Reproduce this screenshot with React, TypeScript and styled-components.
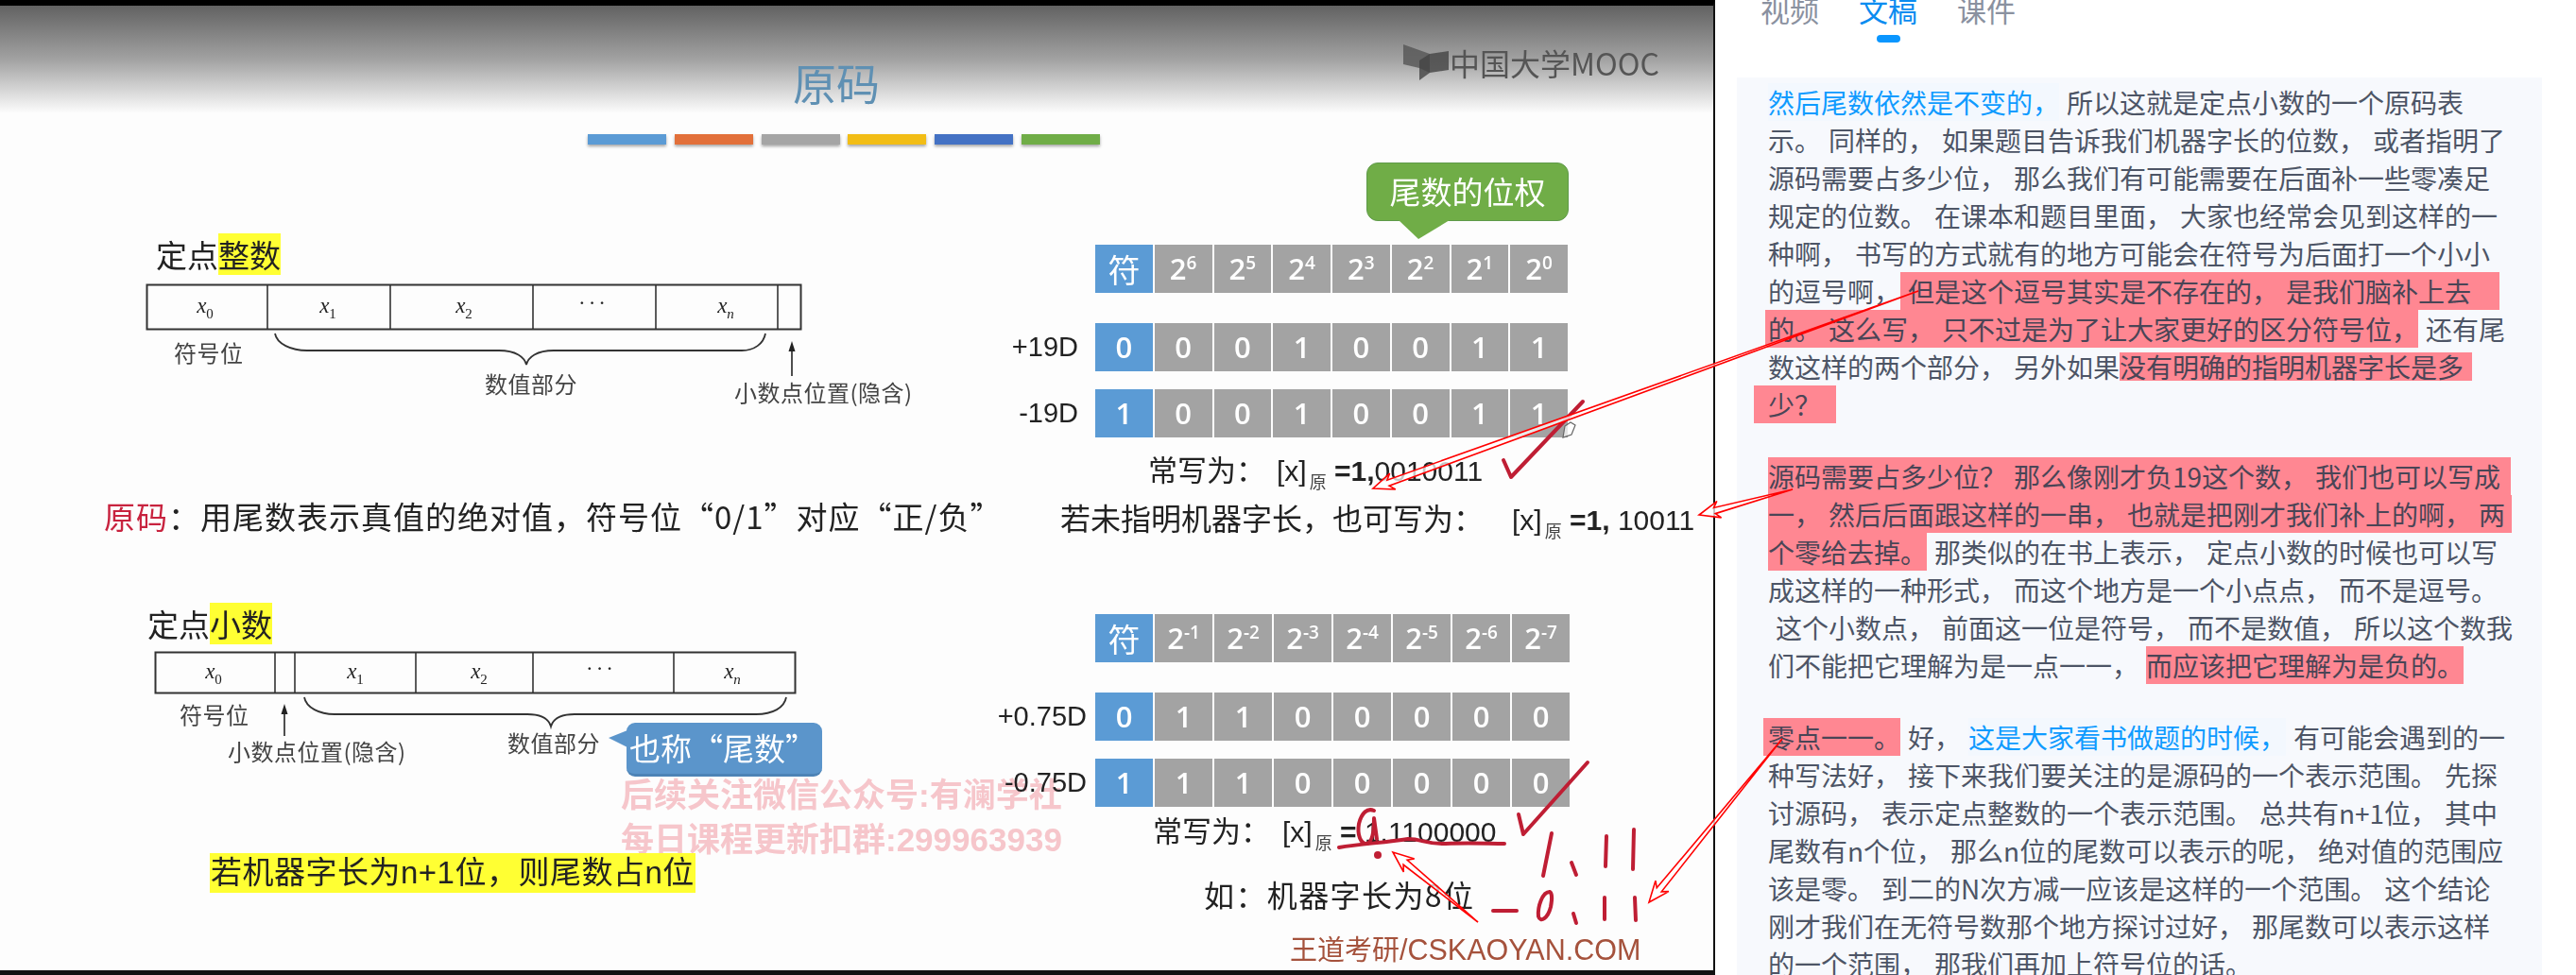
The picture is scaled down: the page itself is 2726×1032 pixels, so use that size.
import React from "react";
import styled, { createGlobalStyle } from "styled-components";

const SLIDE_FONT = `"Liberation Sans", "Noto Sans CJK SC", sans-serif`;
const CJK_FONT = `"Noto Sans CJK SC", sans-serif`;

const GlobalStyle = createGlobalStyle`
  html, body {
    margin: 0;
    padding: 0;
    background: #fff;
    overflow: hidden;
  }
`;

const Page = styled.div`
  position: relative;
  display: flex;
  width: 2726px;
  height: 1032px;
  overflow: hidden;
  background: #fff;
`;

/* ---------- slide ---------- */

const Slide = styled.div`
  position: relative;
  flex: none;
  box-sizing: border-box;
  width: 1815px;
  height: 1032px;
  border-top: 6px solid #000;
  border-bottom: 5px solid #111;
  border-right: 2px solid #111;
  background: #fdfdfd;
  font-family: ${SLIDE_FONT};
  color: #222;
  filter: blur(0.6px);
`;

const SlideHead = styled.div`
  display: flex;
  align-items: flex-start;
  height: 114px;
  padding-left: 839px;
  background: linear-gradient(#626262, #a2a2a2 50%, #fdfdfd 100%);
`;

const SlideTitle = styled.div`
  margin-top: 57px;
  font-family: ${CJK_FONT};
  font-size: 46px;
  line-height: 46px;
  color: #5f90b3;
`;

const Logo = styled.div`
  display: flex;
  align-items: center;
  gap: 1px;
  margin: 41px 57px 0 auto;
  color: #555;
  font-family: ${CJK_FONT};
  font-size: 32px;
  line-height: 38px;
`;

const ColorBars = styled.div`
  display: flex;
  gap: 8.8px;
  margin: 22px 0 0 622px;
`;

const ColorBar = styled.div<{ $color: string }>`
  width: 83px;
  height: 11px;
  background: ${(p) => p.$color};
  box-shadow: 0 2px 3px rgba(0, 0, 0, 0.35);
`;

const SlideBody = styled.div`
  display: grid;
  grid-template-columns: 1050px 1fr;
`;

const Column = styled.div`
  display: flex;
  flex-direction: column;
  align-items: flex-start;
`;

const SectionHeading = styled.div<{ $top: number; $left: number }>`
  margin: ${(p) => p.$top}px 0 0 ${(p) => p.$left}px;
  font-family: ${CJK_FONT};
  font-size: 33px;
  line-height: 44px;
`;

const Yellow = styled.span`
  display: inline-block;
  background: #ffff33;
`;

const FigureSvg = styled.svg<{ $top: number }>`
  display: block;
  margin: ${(p) => p.$top}px 0 0 150px;
  font-family: ${CJK_FONT};
`;

const Definition = styled.div`
  margin: 88px 0 0 110px;
  font-size: 33px;
  line-height: 44px;
  white-space: pre;
  font-family: ${CJK_FONT};
  letter-spacing: 1px;

  b {
    font-weight: 400;
    color: #c8233f;
  }
`;

const Figure2 = styled.div`
  position: relative;
  width: 1050px;
`;

const Callout = styled.div`
  position: absolute;
  left: 663px;
  top: 83px;
  box-sizing: border-box;
  width: 207px;
  height: 57px;
  padding-left: 3px;
  border-radius: 9px;
  border-bottom: 3px solid #4d83b6;
  background: #5b95cb;
  color: #fff;
  font-family: ${CJK_FONT};
  font-size: 33px;
  line-height: 52px;
  white-space: nowrap;

  &::before {
    content: "";
    position: absolute;
    left: -19px;
    top: 8px;
    width: 20px;
    height: 18px;
    background: #5b95cb;
    clip-path: polygon(0 45%, 100% 0, 100% 100%);
  }
`;

const Caption = styled.div`
  margin: 67px 0 0 222px;
  padding: 0 1px;
  background: #ffff33;
  font-family: ${SLIDE_FONT};
  font-size: 33px;
  line-height: 42px;
  letter-spacing: 0.5px;
  white-space: nowrap;
`;

const Watermark = styled.div`
  position: absolute;
  z-index: -1;
  left: 657px;
  top: 812px;
  color: #f6c6cb;
  font-family: ${SLIDE_FONT};
  font-weight: 700;
  font-size: 35px;
  line-height: 47px;
  white-space: nowrap;
`;

const GreenBubble = styled.div`
  position: relative;
  box-sizing: border-box;
  width: 214px;
  height: 62px;
  margin: 19px 0 0 396px;
  border: 1px solid #5f9a4a;
  border-radius: 12px;
  background: #70ad47;
  color: #fff;
  font-family: ${CJK_FONT};
  font-size: 33px;
  line-height: 58px;
  text-align: center;

  &::after {
    content: "";
    position: absolute;
    left: 33px;
    top: 60px;
    width: 54px;
    height: 20px;
    background: #70ad47;
    clip-path: polygon(0 0, 100% 0, 39% 100%);
  }
`;

const BitTable = styled.div<{ $top: number }>`
  display: flex;
  flex-direction: column;
  margin-top: ${(p) => p.$top}px;
`;

const BitRow = styled.div<{ $top?: number; $labelGap: number }>`
  display: flex;
  align-items: center;
  margin-top: ${(p) => p.$top ?? 0}px;

  > span:first-child {
    width: ${(p) => 109 - p.$labelGap}px;
    margin-right: ${(p) => p.$labelGap}px;
    font-size: 29px;
    text-align: right;
    white-space: nowrap;
  }
`;

const Cells = styled.div<{ $cell: number }>`
  display: grid;
  grid-template-columns: repeat(8, ${(p) => p.$cell}px);
  gap: 2px;
`;

const Cell = styled.div<{ $sign?: boolean }>`
  height: 51px;
  background: ${(p) => (p.$sign ? "#5b9bd5" : "#a3a3a3")};
  color: #fff;
  font-family: "Open Sans", ${CJK_FONT};
  font-weight: 600;
  font-size: 31px;
  line-height: 51px;
  text-align: center;

  sup {
    font-size: 19px;
    line-height: 0;
    vertical-align: 11px;
  }
`;

const SignHead = styled(Cell)`
  font-family: ${CJK_FONT};
  font-weight: 400;
  font-size: 34px;
`;

const Formula = styled.div<{ $top: number; $left: number; $size: number; $gap: number }>`
  margin: ${(p) => p.$top}px 0 0 ${(p) => p.$left}px;
  font-family: ${SLIDE_FONT};
  font-size: ${(p) => p.$size}px;
  line-height: ${(p) => p.$size + 6}px;
  white-space: pre;

  em {
    margin-right: ${(p) => p.$gap}px;
    font-style: normal;
    font-family: ${CJK_FONT};
  }

  i {
    font-style: normal;
    font-size: 30px;
  }

  sub {
    margin: 0 0 0 3px;
    font-family: ${CJK_FONT};
    font-size: 18px;
    line-height: 0;
    vertical-align: -8px;
    color: #444;
  }

  b {
    font-size: 30px;
  }
`;

const Example = styled.div`
  margin: 27px 0 0 224px;
  font-size: 32px;
  line-height: 40px;
  white-space: pre;
  font-family: ${CJK_FONT};
  letter-spacing: 1.4px;
`;

const Brand = styled.div`
  margin: 19px 0 0 315px;
  color: #a5523c;
  font-size: 30.5px;
  line-height: 36px;
  white-space: nowrap;

  em {
    font-style: normal;
    font-family: ${CJK_FONT};
    font-size: 29px;
  }
`;

/* ---------- transcript panel ---------- */

const Panel = styled.div`
  flex: 1;
  min-width: 0;
  font-family: ${CJK_FONT};
`;

const TabBar = styled.div`
  display: flex;
  gap: 42px;
  height: 82px;
  padding-left: 48px;
`;

const Tab = styled.div<{ $active?: boolean }>`
  position: relative;
  height: 45px;
  margin-top: -10px;
  color: ${(p) => (p.$active ? "#0a8cf0" : "#8a919f")};
  font-size: 31px;
  line-height: 40px;

  &::after {
    content: "";
    display: ${(p) => (p.$active ? "block" : "none")};
    position: absolute;
    left: 19px;
    top: 47px;
    width: 25px;
    height: 8px;
    border-radius: 4px;
    background: #0a96ff;
  }
`;

const Card = styled.div`
  box-sizing: border-box;
  width: 852px;
  height: 950px;
  margin-left: 23px;
  padding: 6px 0 0 33px;
  background: #f7f9fd;
  color: #4d5566;
  font-size: 28px;
  line-height: 40px;
  word-spacing: 1.7px;
`;

const Para = styled.div`
  margin-bottom: 36px;
`;

const Line = styled.div`
  height: 40px;
  white-space: pre;
`;

const Accent = styled.span`
  color: #0f9bff;
  background: #f3f8fe;
`;

const Mark = styled.span<{ $l?: number; $r?: number; $short?: boolean }>`
  padding-left: ${(p) => p.$l ?? 0}px;
  margin-left: ${(p) => -(p.$l ?? 0)}px;
  padding-right: ${(p) => p.$r ?? 0}px;
  margin-right: ${(p) => -(p.$r ?? 0)}px;
  color: #4a4556;
  background: ${(p) =>
    p.$short
      ? "linear-gradient(#ff8792, #ff8792) center / 100% 30px no-repeat"
      : "#ff8792"};
`;

/* ---------- overlay annotations ---------- */

const Overlay = styled.svg`
  position: absolute;
  left: 0;
  top: 0;
  pointer-events: none;
`;

const Ink = styled.path`
  fill: none;
  stroke: #bf1e34;
  stroke-width: 4;
  stroke-linecap: round;
  stroke-linejoin: round;
`;

const ArrowShape = styled.polygon`
  fill: #fff;
  fill-opacity: 0.75;
  stroke: #f00;
  stroke-width: 1.6;
  stroke-linejoin: miter;
`;

function hollowArrow(x1: number, y1: number, x2: number, y2: number) {
  const len = Math.hypot(x2 - x1, y2 - y1);
  const ux = (x2 - x1) / len;
  const uy = (y2 - y1) / len;
  const nx = -uy;
  const ny = ux;
  const at = (along: number, side: number) =>
    `${x2 - ux * along + nx * side},${y2 - uy * along + ny * side}`;
  return [
    `${x1},${y1}`,
    at(17, 3.2),
    at(22, 9),
    at(0, 0),
    at(22, -9),
    at(17, -3.2),
  ].join(" ");
}

const ARROWS: [number, number, number, number][] = [
  [2030, 308, 1453, 517],
  [1897, 518, 1798, 545],
  [1886, 782, 1745, 955],
  [1564, 976, 1474, 902],
];

const INK_PATHS = [
  "M1591 487 L1599 505 L1675 425",
  "M1607 862 L1612 883 L1680 807",
  "M1454 858 C1447 855 1441 860 1438 872 C1436 884 1440 893 1446 893 C1452 892 1454 880 1454 866 L1457 888",
  "M1417 897 C1440 893 1465 892 1490 888 C1505 888 1510 894 1530 893 C1555 892 1575 893 1592 893",
  "M1642 882 L1633 927",
  "M1663 913 L1668 926",
  "M1700 885 L1699 917",
  "M1729 878 L1728 920",
  "M1580 964 L1605 964",
  "M1640 944 C1632 944 1627 960 1628 970 C1630 977 1638 972 1641 960 C1643 950 1642 945 1640 944",
  "M1665 967 L1668 977",
  "M1698 950 L1698 973",
  "M1730 950 L1731 974",
];

/* ---------- data ---------- */

const BAR_COLORS = ["#5b9bd5", "#e2703a", "#a5a5a5", "#f2bd15", "#4472c4", "#70ad47"];

const FIRST_BITS = ["6", "5", "4", "3", "2", "1", "0"];
const SECOND_BITS = ["-1", "-2", "-3", "-4", "-5", "-6", "-7"];

function Bits({ values, cell }: { values: string; cell: number }) {
  return (
    <Cells $cell={cell}>
      {values.split("").map((v, i) => (
        <Cell key={i} $sign={i === 0}>
          {v}
        </Cell>
      ))}
    </Cells>
  );
}

function Powers({ exps, cell }: { exps: string[]; cell: number }) {
  return (
    <Cells $cell={cell}>
      <SignHead $sign>符</SignHead>
      {exps.map((e) => (
        <Cell key={e}>
          2<sup>{e}</sup>
        </Cell>
      ))}
    </Cells>
  );
}

function XLabel({ x, y, sub }: { x: number; y: number; sub: string }) {
  return (
    <text x={x} y={y} fontFamily="Liberation Serif" fontSize="23" fill="#222" textAnchor="middle">
      <tspan fontStyle="italic">x</tspan>
      <tspan dy="6" fontSize="15" fontStyle={sub === "n" ? "italic" : "normal"}>
        {sub}
      </tspan>
    </text>
  );
}

function Dots({ x, y }: { x: number; y: number }) {
  return (
    <text x={x} y={y} fontFamily="Liberation Serif" fontSize="23" fill="#222" textAnchor="middle" letterSpacing="3">
      ···
    </text>
  );
}

function Label({ x, y, children }: { x: number; y: number; children: React.ReactNode }) {
  return (
    <text x={x} y={y} fontSize="24" fill="#444" letterSpacing="0.5">
      {children}
    </text>
  );
}

function TopFigure() {
  return (
    <FigureSvg $top={5} width="830" height="140" viewBox="150 296 830 140">
      <rect x="155.5" y="301.5" width="692" height="47" fill="none" stroke="#333" strokeWidth="2" />
      {[283, 413, 564, 694, 823].map((x) => (
        <line key={x} x1={x} x2={x} y1="301" y2="349" stroke="#333" strokeWidth="1.6" />
      ))}
      <XLabel x={217} y={331} sub="0" />
      <XLabel x={347} y={331} sub="1" />
      <XLabel x={491} y={331} sub="2" />
      <Dots x={628} y={328} />
      <XLabel x={768} y={331} sub="n" />
      <path
        d="M291 353 C293 364 308 371 325 371 L528 371 C546 371 555 378 557 386 C559 378 568 371 586 371 L785 371 C798 371 808 364 810 353"
        fill="none"
        stroke="#333"
        strokeWidth="1.8"
      />
      <Label x={184} y={383}>符号位</Label>
      <Label x={513} y={416}>数值部分</Label>
      <Label x={777} y={425}>小数点位置(隐含)</Label>
      <path d="M838 398 V368" stroke="#222" strokeWidth="1.6" />
      <path d="M838 361 L834.5 372 H841.5 Z" fill="#222" />
    </FigureSvg>
  );
}

function BottomFigure() {
  return (
    <FigureSvg $top={4} width="740" height="150" viewBox="150 686 740 150">
      <rect x="164.5" y="690.5" width="677" height="43" fill="none" stroke="#333" strokeWidth="2" />
      {[291, 312, 440, 564, 713].map((x) => (
        <line key={x} x1={x} x2={x} y1="690" y2="734" stroke="#333" strokeWidth="1.6" />
      ))}
      <XLabel x={226} y={718} sub="0" />
      <XLabel x={376} y={718} sub="1" />
      <XLabel x={507} y={718} sub="2" />
      <Dots x={636} y={715} />
      <XLabel x={775} y={718} sub="n" />
      <path
        d="M322 738 C324 749 338 756 354 756 L558 756 C574 756 581 762 583 769 C585 762 592 756 608 756 L800 756 C818 756 830 749 832 738"
        fill="none"
        stroke="#333"
        strokeWidth="1.8"
      />
      <Label x={190} y={766}>符号位</Label>
      <Label x={241} y={805}>小数点位置(隐含)</Label>
      <Label x={537} y={796}>数值部分</Label>
      <path d="M301 779 V752" stroke="#222" strokeWidth="1.6" />
      <path d="M301 745 L297.5 756 H304.5 Z" fill="#222" />
    </FigureSvg>
  );
}

function MoocMark() {
  return (
    <svg width="48" height="38" viewBox="0 0 48 38">
      <path d="M0 0 L28 10 V30 L17 25 L0 21 Z" fill="#555" fillOpacity="0.8" />
      <path d="M48 7 V27 L28 30 L17 38 V17 L28 10 Z" fill="#444" fillOpacity="0.8" />
    </svg>
  );
}

export default function App() {
  return (
    <Page>
      <GlobalStyle />
      <Slide>
        <Watermark>
          后续关注微信公众号:有澜学社
          <br />
          每日课程更新扣群:299963939
        </Watermark>
        <SlideHead>
          <SlideTitle>原码</SlideTitle>
          <Logo>
            <MoocMark />
            中国大学MOOC
          </Logo>
        </SlideHead>
        <ColorBars>
          {BAR_COLORS.map((c) => (
            <ColorBar key={c} $color={c} />
          ))}
        </ColorBars>
        <SlideBody>
          <Column>
            <SectionHeading $top={94} $left={165}>
              定点<Yellow>整数</Yellow>
            </SectionHeading>
            <TopFigure />
            <Definition>
              <b>原码</b>：用尾数表示真值的绝对值，符号位“0/1”对应“正/负”
            </Definition>
            <SectionHeading $top={70} $left={156}>
              定点<Yellow>小数</Yellow>
            </SectionHeading>
            <Figure2>
              <BottomFigure />
              <Callout>也称“尾数”</Callout>
            </Figure2>
            <Caption>若机器字长为n+1位，则尾数占n位</Caption>
          </Column>
          <Column>
            <GreenBubble>尾数的位权</GreenBubble>
            <BitTable $top={25}>
              <BitRow $labelGap={18}>
                <span />
                <Powers exps={FIRST_BITS} cell={60.75} />
              </BitRow>
              <BitRow $top={32} $labelGap={18}>
                <span>+19D</span>
                <Bits values="00010011" cell={60.75} />
              </BitRow>
              <BitRow $top={19} $labelGap={18}>
                <span>-19D</span>
                <Bits values="10010011" cell={60.75} />
              </BitRow>
            </BitTable>
            <Formula $top={14} $left={165} $size={31} $gap={12}>
              <em>常写为：</em>
              <i>[x]</i>
              <sub>原</sub>
              <i> </i>
              <b>=1,</b>
              <i>0010011</i>
            </Formula>
            <Formula $top={11} $left={72} $size={32} $gap={30}>
              <em>若未指明机器字长，也可写为：</em>
              <i>[x]</i>
              <sub>原</sub>
              <i> </i>
              <b>=1,</b>
              <i> 10011</i>
            </Formula>
            <BitTable $top={80}>
              <BitRow $labelGap={9}>
                <span />
                <Powers exps={SECOND_BITS} cell={61} />
              </BitRow>
              <BitRow $top={32} $labelGap={9}>
                <span>+0.75D</span>
                <Bits values="01100000" cell={61} />
              </BitRow>
              <BitRow $top={19} $labelGap={9}>
                <span>-0.75D</span>
                <Bits values="11100000" cell={61} />
              </BitRow>
            </BitTable>
            <Formula $top={5} $left={170} $size={31} $gap={13}>
              <em>常写为：</em>
              <i>[x]</i>
              <sub>原</sub>
              <i> </i>
              <b>=</b>
              <i> 1.1100000</i>
            </Formula>
            <Example>如：机器字长为8位</Example>
            <Brand>
              <em>王道考研</em>/CSKAOYAN.COM
            </Brand>
          </Column>
        </SlideBody>
      </Slide>

      <Panel>
        <TabBar>
          <Tab>视频</Tab>
          <Tab $active>文稿</Tab>
          <Tab>课件</Tab>
        </TabBar>
        <Card>
          <Para>
            <Line>
              <Accent>然后尾数依然是不变的，</Accent> 所以这就是定点小数的一个原码表
            </Line>
            <Line>示。 同样的， 如果题目告诉我们机器字长的位数， 或者指明了</Line>
            <Line>源码需要占多少位， 那么我们有可能需要在后面补一些零凑足</Line>
            <Line>规定的位数。 在课本和题目里面， 大家也经常会见到这样的一</Line>
            <Line>种啊， 书写的方式就有的地方可能会在符号为后面打一个小小</Line>
            <Line>
              的逗号啊，<Mark $r={30}> 但是这个逗号其实是不存在的， 是我们脑补上去</Mark>
            </Line>
            <Line>
              <Mark $l={3}>的。 这么写， 只不过是为了让大家更好的区分符号位，</Mark> 还有尾
            </Line>
            <Line>
              数这样的两个部分， 另外如果<Mark $r={9} $short>没有明确的指明机器字长是多</Mark>
            </Line>
            <Line>
              <Mark $l={15} $r={16}>少？</Mark>
            </Line>
          </Para>
          <Para>
            <Line>
              <Mark $r={11}>源码需要占多少位？ 那么像刚才负19这个数， 我们也可以写成</Mark>
            </Line>
            <Line>
              <Mark $r={7}>一， 然后后面跟这样的一串， 也就是把刚才我们补上的啊， 两</Mark>
            </Line>
            <Line>
              <Mark>个零给去掉。</Mark> 那类似的在书上表示， 定点小数的时候也可以写
            </Line>
            <Line>成这样的一种形式， 而这个地方是一个小点点， 而不是逗号。</Line>
            <Line> 这个小数点， 前面这一位是符号， 而不是数值， 所以这个数我</Line>
            <Line>
              们不能把它理解为是一点一一， <Mark>而应该把它理解为是负的。</Mark>
            </Line>
          </Para>
          <Para>
            <Line>
              <Mark $l={5}>零点一一。</Mark> 好， <Accent>这是大家看书做题的时候，</Accent> 有可能会遇到的一
            </Line>
            <Line>种写法好， 接下来我们要关注的是源码的一个表示范围。 先探</Line>
            <Line>讨源码， 表示定点整数的一个表示范围。 总共有n+1位， 其中</Line>
            <Line>尾数有n个位， 那么n位的尾数可以表示的呢， 绝对值的范围应</Line>
            <Line>该是零。 到二的N次方减一应该是这样的一个范围。 这个结论</Line>
            <Line>刚才我们在无符号数那个地方探讨过好， 那尾数可以表示这样</Line>
            <Line>的一个范围， 那我们再加上符号位的话。</Line>
          </Para>
        </Card>
      </Panel>

      <Overlay width="2726" height="1032" viewBox="0 0 2726 1032">
        {INK_PATHS.map((d) => (
          <Ink key={d} d={d} />
        ))}
        <circle cx="1458" cy="905" r="4" fill="#bf1e34" />
        <path
          d="M1654 463 L1656 451 L1662 447 L1667 450 L1663 460 Z"
          fill="#fff"
          fillOpacity="0.7"
          stroke="#666"
          strokeWidth="1.2"
        />
        {ARROWS.map(([x1, y1, x2, y2]) => (
          <ArrowShape key={x1} points={hollowArrow(x1, y1, x2, y2)} />
        ))}
      </Overlay>
    </Page>
  );
}
